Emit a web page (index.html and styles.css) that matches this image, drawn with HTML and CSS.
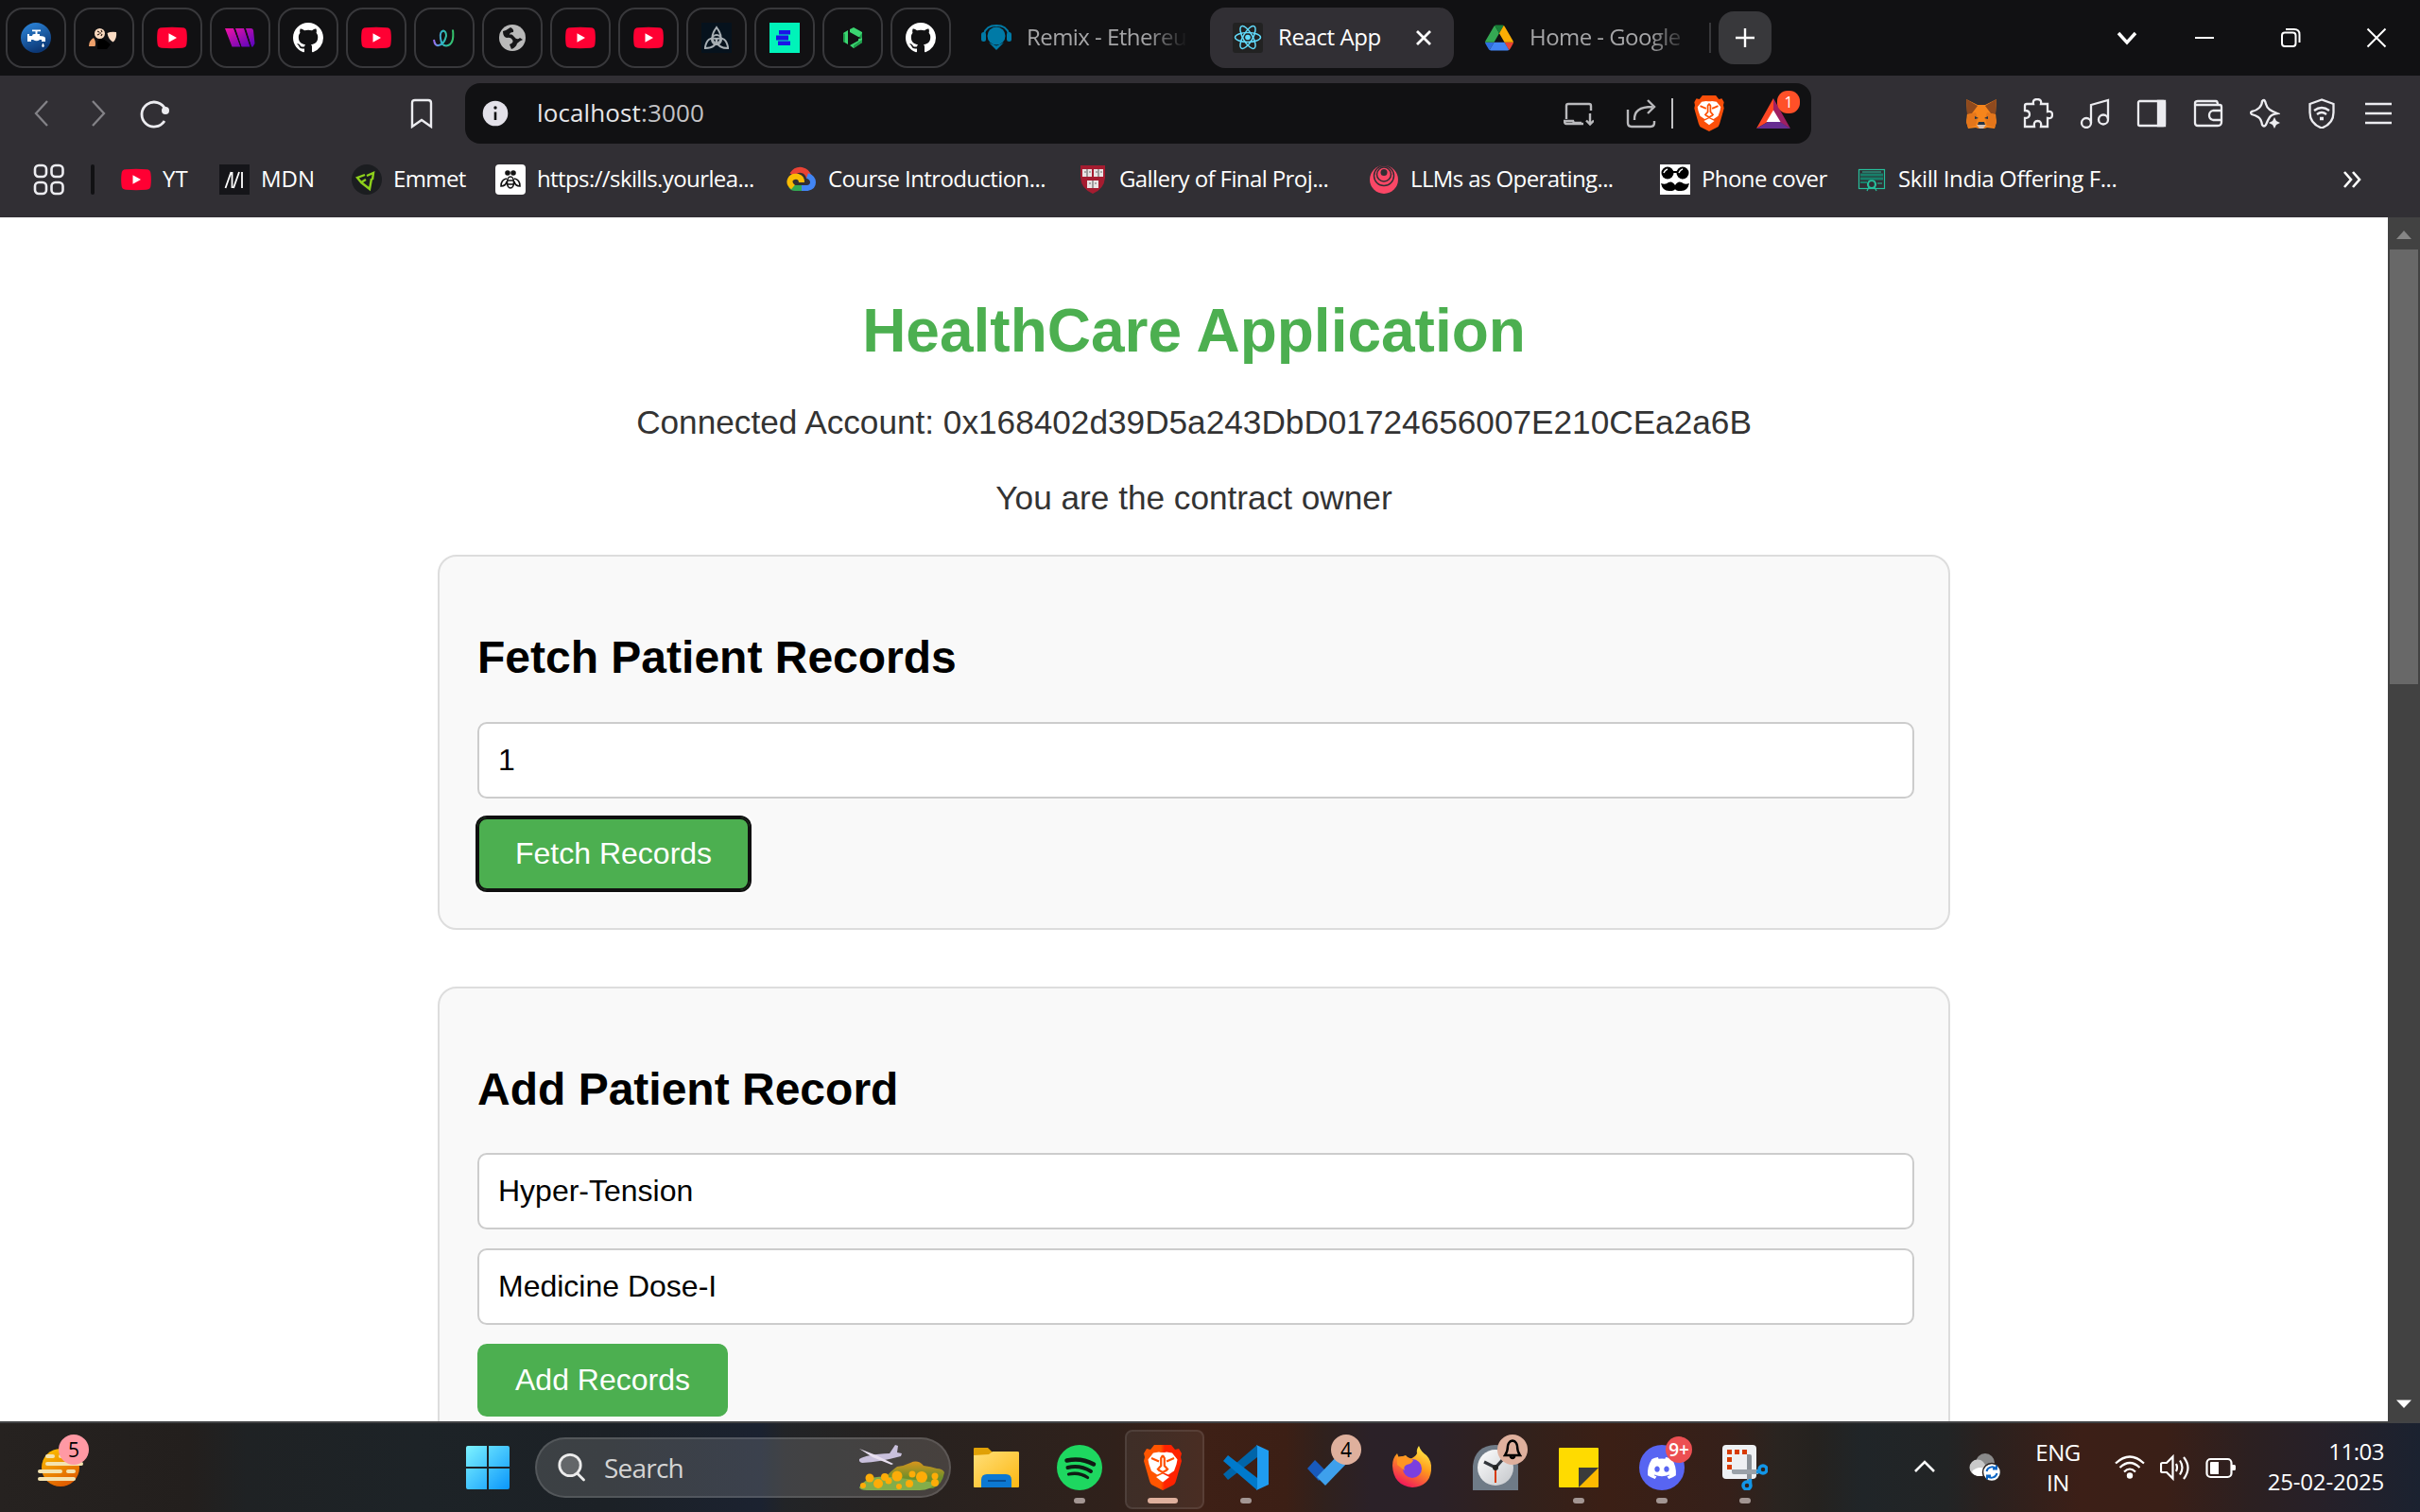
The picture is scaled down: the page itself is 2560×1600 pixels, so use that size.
FILE: index.html
```html
<!DOCTYPE html>
<html lang="en">
<head>
<meta charset="utf-8">
<title>React App</title>
<link rel="stylesheet" href="styles.css">
</head>
<body>
<svg class="sprite" aria-hidden="true">
  <defs>
    <linearGradient id="g-blue" x1="0" y1="0" x2="0.4" y2="1"><stop offset="0" stop-color="#2e8ae0"/><stop offset="1" stop-color="#0c3876"/></linearGradient>
    <linearGradient id="g-w" x1="0" y1="0" x2="1" y2="1"><stop offset="0" stop-color="#f213a4"/><stop offset="1" stop-color="#5204bf"/></linearGradient>
    <linearGradient id="g-swirl" x1="0" y1="0" x2="1" y2="0"><stop offset="0" stop-color="#9b6cf0"/><stop offset=".4" stop-color="#2fb6c9"/><stop offset="1" stop-color="#35c46a"/></linearGradient>
    <linearGradient id="g-win" x1="0" y1="0" x2="1" y2="1"><stop offset="0" stop-color="#7df3ff"/><stop offset="1" stop-color="#0a96fb"/></linearGradient>
    <linearGradient id="g-sun" x1="0" y1="0" x2=".5" y2="1"><stop offset="0" stop-color="#ffc800"/><stop offset="1" stop-color="#e05f00"/></linearGradient>
    <linearGradient id="g-folder" x1="0" y1="0" x2="1" y2="1"><stop offset="0" stop-color="#ffdf78"/><stop offset="1" stop-color="#fdb813"/></linearGradient>
    <linearGradient id="g-brave" x1="0" y1="0" x2="1" y2="0"><stop offset="0" stop-color="#ff5500"/><stop offset=".45" stop-color="#ff5500"/><stop offset=".55" stop-color="#ff2200"/><stop offset="1" stop-color="#ff2200"/></linearGradient>
    <linearGradient id="g-fire" x1=".8" y1="0" x2=".3" y2="1"><stop offset="0" stop-color="#fff14a"/><stop offset=".45" stop-color="#ff9a1c"/><stop offset="1" stop-color="#f0105e"/></linearGradient>
    <linearGradient id="g-hill" x1="0" y1="0" x2="0" y2="1"><stop offset="0" stop-color="#d9951c"/><stop offset=".6" stop-color="#6f8f2a"/></linearGradient>
    <linearGradient id="g-clock" x1="0" y1="0" x2="1" y2="1"><stop offset="0" stop-color="#fff"/><stop offset="1" stop-color="#c3c6ca"/></linearGradient>
    <symbol id="youtube" viewBox="0 0 32 32"><path fill="#ff0033" d="M5 5.3Q16 4.4 27 5.3 31.300 5.500 31.500 10 32.200 16 31.500 22 31.300 26.500 27 26.700 16 27.600 5 26.700.7 26.500.5 22-.2 16 .5 10 .7 5.500 5 5.300z"/><path fill="#fff" d="M12.500 11.300v9.400l8.500-4.700z"/></symbol>
    <symbol id="github" viewBox="0 0 16 16"><path fill="#fff" d="M8 0C3.580 0 0 3.580 0 8c0 3.540 2.290 6.530 5.470 7.590.4.070.55-.17.55-.38 0-.19-.01-.82-.01-1.490-2.010.37-2.530-.49-2.690-.94-.09-.23-.48-.94-.82-1.130-.28-.15-.68-.52-.01-.53.63-.01 1.080.58 1.230.82.72 1.210 1.870.87 2.330.66.07-.52.28-.87.51-1.070-1.780-.2-3.640-.89-3.640-3.950 0-.87.31-1.590.82-2.150-.08-.2-.36-1.020.08-2.120 0 0 .67-.21 2.200.82.64-.18 1.320-.27 2-.27s1.360.09 2 .27c1.530-1.040 2.200-.82 2.200-.82.44 1.100.16 1.920.08 2.120.51.56.82 1.270.82 2.150 0 3.070-1.870 3.750-3.650 3.950.29.25.54.73.54 1.480 0 1.070-.01 1.930-.01 2.200 0 .21.15.46.55.38A8.010 8.010 0 0 0 16 8c0-4.420-3.580-8-8-8z"/></symbol>
    <symbol id="lion" viewBox="0 0 40 48"><path d="M11 0H29L33 5l4-1 3 5-1 4 1 4-6 21q-1 4-4 5L20 48l-10-5q-3-1-4-5L0 17l1-4L0 9l3-5 4 1z"/><path fill="#fff" d="M10 8.500l6-1q4 1 8 0l6 1 5.500 7-1 5-2.500 7-6 4-6-2.500-6 2.500-6-4-2.500-7-1-5z"/><path fill="#fff" d="M20 30.500l7 3.500-7 5.500-7-5.500z"/><path fill="none" stroke="#ff5000" stroke-width="2.200" d="M8 14l8 3.500M32 14l-8 3.500M20 11l-1.800 3v8l-4 4.500M20 11l1.800 3v8l4 4.500M15.500 26.500l4.500 2.500 4.500-2.500"/></symbol>
  </defs>
</svg>

<header class="chrome">
  <div class="tabstrip">
    <div class="pin"><svg viewBox="0 0 32 32"><circle cx="16" cy="16" r="16" fill="url(#g-blue)"/><path fill="#fff" d="M12 7.500h9v1.800h-3.500V12H20v2q5 0 6 2v4h-4v-2h-2q-3 2.500-7 0h-2v2H7v-8h2v2h3q0-2 2-2h1.500V9.300H12zM23.500 21.500q2.500 4 0 4.500-2.500-.5 0-4.500z"/></svg></div>
    <div class="pin"><svg viewBox="0 0 32 32"><circle cx="11.500" cy="11.500" r="5.500" fill="#f9d9bf"/><path d="M9 9l2 1M13 8l1 2M9 13l2-1M13 14l1-2M11 11h2" stroke="#2a1a12" stroke-width="1.200"/><path fill="#eda06b" d="M0 25q0-6 5-9 3 4 1.500 9z"/><path fill="#fbdcc4" d="M19.500 11q4-2 9.500-1 1 7-3.500 10.500-5-3-6-9.500z"/><path fill="#000" d="M9 20q4-5 9-1l5 4-4 5H9z"/></svg></div>
    <div class="pin"><svg><use href="#youtube"/></svg></div>
    <div class="pin"><svg viewBox="0 0 32 32"><path fill="url(#g-w)" d="M0 6h9l7.500 19.500h-9zM11 6h9l6.500 19.500h-9zM22 6h5.500q2 0 2.500 2l1.500 14-2 3.500H28z"/><path fill="none" stroke="#111113" d="M10 6l7 20M21 6l6.500 20"/></svg></div>
    <div class="pin"><svg><use href="#github"/></svg></div>
    <div class="pin"><svg><use href="#youtube"/></svg></div>
    <div class="pin"><svg viewBox="0 0 32 32"><path fill="none" stroke="url(#g-swirl)" stroke-width="2" d="M5 18q1 7 5 6 6-1 8-10 0-5-3-5.500-4 1-3 8 1 8 6 8 9-1 7-17"/></svg></div>
    <div class="pin"><svg viewBox="0 0 32 32"><circle cx="16" cy="16" r="14" fill="#b9b9b9"/><path fill="#151517" d="M14 5q-4 3-8 4 0 6 4 7 4-1 6 2t-3 5l2 5q5-2 6-6 3-3 6-4l-3-2q-3 3-6-1t-5-2q0-3 4-3 1-3-3-5z"/></svg></div>
    <div class="pin"><svg><use href="#youtube"/></svg></div>
    <div class="pin"><svg><use href="#youtube"/></svg></div>
    <div class="pin"><svg viewBox="0 0 32 32"><rect width="32" height="32" fill="#06121d"/><g fill="none" stroke="#a9b0b5" stroke-width="2"><path d="M16 5q-9 12 0 18 9-6 0-18z"/><path d="M4 26q2-12 12-9 0 10-12 10z"/><path d="M28 26q-2-12-12-9 0 10 12 10z"/></g><circle cx="16" cy="18" r="5" fill="none" stroke="#a9b0b5" stroke-width="2"/></svg></div>
    <div class="pin"><svg viewBox="0 0 32 32"><rect width="32" height="32" fill="#00f3b9"/><path fill="#1a15e6" d="M10 8h12v4.500H10zM7 13.500h13v5H7zM9 19.500h13v4.500H9z"/></svg></div>
    <div class="pin"><svg viewBox="0 0 32 32"><path fill="#3bd671" d="M6 11l5-3v15l-5-3zM13 7l4-2 9 5v6l-4-1-9-5zM22 17l4-1v5l-9 6-4-3 9-5z"/><path fill="#1f9e4c" d="M6 11l2 1v9l-2-1zM25 12l1-1v5l-3-1zM17 27v-3l9-6v3z"/></svg></div>
    <div class="pin"><svg><use href="#github"/></svg></div>
    <div class="tab"><svg viewBox="0 0 32 32"><g fill="#007aa6"><circle cx="16" cy="14" r="9.500"/><rect x="0" y="10" width="5" height="10" rx="2.500"/><rect x="27" y="10" width="5" height="10" rx="2.500"/><path d="M8 21l8 3.500 8-3.500-8 8z"/></g><path fill="none" stroke="#007aa6" stroke-width="2" d="M3 12Q5 3 16 3t13 9"/></svg><span class="tab-title">Remix - Ethereu</span></div>
    <div class="tab active"><svg viewBox="0 0 32 32"><rect width="32" height="32" rx="3" fill="#222"/><circle cx="16" cy="15.500" r="2.800" fill="#61dafb"/><g fill="none" stroke="#61dafb" stroke-width="1.500"><ellipse cx="16" cy="15.500" rx="13.500" ry="5"/><ellipse cx="16" cy="15.500" rx="13.500" ry="5" transform="rotate(60 16 15.500)"/><ellipse cx="16" cy="15.500" rx="13.500" ry="5" transform="rotate(120 16 15.500)"/></g></svg><span class="tab-title">React App</span><svg class="tab-close" viewBox="0 0 16 16"><path d="M1 1l14 14M15 1L1 15"/></svg></div>
    <div class="tab drive"><svg viewBox="-3 -7 93.300 92"><path fill="#2f6fe0" d="m6.600 66.850 3.850 6.650c.8 1.400 1.950 2.500 3.300 3.300l13.750-23.800h-27.500c0 1.550.4 3.100 1.200 4.500z"/><path fill="#34a853" d="m43.650 25-13.750-23.800c-1.350.8-2.500 1.900-3.300 3.300l-25.400 44a9.060 9.060 0 0 0-1.200 4.500h27.500z"/><path fill="#ea4335" d="m73.550 76.800c1.350-.8 2.500-1.900 3.300-3.300l1.600-2.750 7.650-13.250c.8-1.400 1.200-2.950 1.200-4.500h-27.500l5.850 11.500z"/><path fill="#188038" d="m43.650 25 13.750-23.800c-1.350-.8-2.900-1.200-4.500-1.200h-18.500c-1.600 0-3.150.45-4.500 1.200z"/><path fill="#4285f4" d="m59.800 53h-32.300l-13.750 23.800c1.350.8 2.900 1.200 4.500 1.200h50.800c1.600 0 3.150-.45 4.500-1.200z"/><path fill="#fbad04" d="m73.400 26.500-12.700-22c-.8-1.400-1.950-2.500-3.300-3.300l-13.750 23.800 16.150 28h27.450c0-1.550-.4-3.100-1.200-4.500z"/></svg><span class="tab-title">Home - Google</span></div>
    <span class="tab-divider"></span>
    <div class="new-tab"><svg viewBox="0 0 22 22"><path d="M11 1v20M1 11h20"/></svg></div>
    <div class="window-controls">
      <svg class="wc-search" viewBox="0 0 64 80"><path stroke-width="3.400" d="M23 35l9 10 9-10"/></svg>
      <svg viewBox="0 0 92 80"><path stroke-width="2" d="M36 40h20"/></svg>
      <svg viewBox="0 0 92 80"><rect x="37" y="34.500" width="14.500" height="14.500" rx="3"/><path d="M41 31h9q5.500 0 5.500 5.500V45"/></svg>
      <svg viewBox="0 0 92 80"><path d="M36.500 30.500l19 19M55.500 30.500l-19 19"/></svg>
    </div>
  </div>

  <div class="toolbar">
    <div class="nav-btn dim"><svg viewBox="0 0 32 32"><path d="M22 3L10 16l12 13"/></svg></div>
    <div class="nav-btn dim"><svg viewBox="0 0 32 32"><path d="M10 3l12 13-12 13"/></svg></div>
    <div class="nav-btn"><svg viewBox="0 0 32 32"><path d="M27 12A13 13 0 1 0 26 24" stroke-width="2.800"/><circle cx="27" cy="13" r="4" fill="#ececf0" stroke="none"/></svg></div>
    <div class="nav-btn mark"><svg viewBox="0 0 32 32"><path stroke-width="2.400" d="M6 5q0-3 3-3h14q3 0 3 3v25l-10-7-10 7z"/></svg></div>
    <div class="urlbar">
      <svg viewBox="0 0 32 32"><circle cx="16" cy="16" r="13.300" fill="#e3e1e9"/><path stroke="#111113" stroke-width="2.600" d="M16 14.500V23"/><circle cx="16" cy="10" r="1.700" fill="#111113"/></svg>
      <span class="url">localhost<span class="port">:3000</span></span>
      <div class="url-actions">
        <svg viewBox="0 0 32 32"><path d="M21 27H3q-2 0-2-3h9l1 2h8M3 22V8q0-2 2-2h22q2 0 2 2v5M28 16v11M24 23.500l4 4 4-4"/></svg>
        <svg class="share" viewBox="0 0 32 32"><path d="M2 12v14q0 4 4 4h20q4 0 4-4v-2M9 23q-1-14 19-14M23 2l7 7-7 7"/></svg>
        <span class="url-divider"></span>
        <svg class="shield" viewBox="0 0 40 48"><use href="#lion"/></svg>
        <div class="bat"><svg viewBox="0 0 36 32"><path fill="#ff4724" d="M18 0L0 32l12-7 6-11z"/><path fill="#9e1f63" d="M18 0l18 32-12-7-6-11z"/><path fill="#662d91" d="M0 32h36l-11-7H12z"/><path fill="#fff" d="M18 12.500l7.500 12.500h-15z"/></svg><span class="bat-badge">1</span></div>
      </div>
    </div>
    <div class="extensions">
      <div class="nav-btn"><svg class="fox" viewBox="0 0 32 32"><path fill="#f6851b" d="M0 1l12 6h8l12-6-1 15 1 9-2 7-8-1-3 1h-6l-3-1-8 1-2-7 1-9z"/><path fill="#8f4a1e" d="M0 1l12 7-6 8-5 1zM32 1L20 8l6 8 5 1z"/><path fill="#e4761b" d="M2 17l8-2 2 6-2 8-8 2-2-6zM30 17l-8-2-2 6 2 8 8 2 2-6z"/><path fill="#233447" d="M9 19l4 2-4 1zM23 19l-4 2 4 1zM13 25h6l1 3h-8z"/><path fill="#d7c1b3" d="M11 28h10l-3 4h-4z"/></svg></div>
      <div class="nav-btn"><svg viewBox="0 0 32 32"><path d="M4 6h7q-1-5 4-5t4 5h7v8q5-1 5 3.500T26 21v9h-7q1-6-3.500-6T12 30H2v-9q5 0 5-4t-5-4V8q0-2 2-2z"/></svg></div>
      <div class="nav-btn"><svg viewBox="0 0 32 32"><path d="M12 26V7l18-5v20"/><circle cx="7" cy="26" r="5"/><circle cx="25" cy="22.500" r="5"/></svg></div>
      <div class="nav-btn"><svg viewBox="0 0 32 32"><rect x="2" y="3" width="28" height="26" rx="1.500"/><path fill="#ececf0" d="M23 3h7v26h-7z"/></svg></div>
      <div class="nav-btn"><svg viewBox="0 0 32 32"><path d="M2 5v21q0 3 3 3h21q4 0 4-4V9q0-2-2-2H4q-2 0-2-2 0-2 3-2h19q2 0 2 4M30 13H21q-4 1-4 5t4 5h9"/></svg></div>
      <div class="nav-btn"><svg viewBox="0 0 32 32"><path d="M15 2q1 0 2 4t4 6 8 4q-6 1-8 4t-4 8q-2 3-4 0-1-6-4-8t-7-3q-2-2 0-3 5-1 8-4t3-7q1-1 2-1z"/><path fill="#ececf0" stroke="none" d="M26 20l2 4 4 2-4 2-2 4-2-4-4-2 4-2z"/></svg></div>
      <div class="nav-btn"><svg viewBox="0 0 32 32"><path d="M16 1.500L3.500 6v9q0 12 12.500 16.500Q28.500 27 28.500 15V6zM8 13q8-6 16 0M11 17q5-4 10 0"/><path stroke-width="3.500" d="M14 21.500h4"/></svg></div>
      <div class="nav-btn"><svg viewBox="0 0 32 32"><path d="M2 6h28M2 16h28M2 26h28"/></svg></div>
    </div>
  </div>

  <div class="bookmarks">
    <svg class="apps" viewBox="0 0 34 34"><g fill="none" stroke="#ececf0" stroke-width="2.600"><rect x="2" y="2" width="12" height="12" rx="4"/><rect x="19.500" y="2" width="12" height="12" rx="4"/><rect x="2" y="20" width="12" height="12" rx="4"/><rect x="19.500" y="20" width="12" height="12" rx="4"/></g></svg>
    <span class="bm-divider"></span>
    <div class="bm wide w104"><svg><use href="#youtube"/></svg><span>YT</span></div>
    <div class="bm wide w140"><svg viewBox="0 0 32 32"><rect width="32" height="32" fill="#151519"/><path fill="none" stroke="#fff" stroke-width="1.800" d="M6.500 25L12.500 8M13.500 8v17M15 25l6-17M24 8v17"/></svg><span>MDN</span></div>
    <div class="bm w152"><svg viewBox="0 0 32 32"><circle cx="16" cy="16" r="16" fill="#1b1d20"/><path fill="none" stroke="#8ed11b" stroke-width="2.400" d="M14 11l-8 3 4 5 5-3M10 19l9 7 2-11M16 12l7-3-1 7"/></svg><span>Emmet</span></div>
    <div class="bm w308"><svg viewBox="0 0 32 32"><rect width="32" height="32" rx="4" fill="#fff"/><g fill="none" stroke="#111" stroke-width="1.600"><circle cx="13" cy="9" r="2" fill="#111"/><circle cx="19" cy="9" r="2" fill="#111"/><ellipse cx="16" cy="19" rx="3.500" ry="6"/><path d="M13 17h6M13 21h6M12 15q-6 1-6 8 5 0 6-5M20 15q6 1 6 8-5 0-6-5"/></g></svg><span>https://skills.yourlea...</span></div>
    <div class="bm w308"><svg viewBox="0 0 32 32"><g fill="none" stroke-width="6"><path stroke="#ea4335" d="M6 11Q10 5 16 6t8 8"/><path stroke="#4285f4" d="M22 12q6 2 6 7t-6 6h-6"/><path stroke="#34a853" d="M16 25H9q-3 0-4-2"/><path stroke="#fbbc04" d="M7 24q-5-4-3-8t8-3q4 1 4 6"/></g></svg><span>Course Introduction...</span></div>
    <div class="bm w308"><svg viewBox="0 0 32 32"><path fill="#a51c30" d="M3 1h26v13q-1 12-13 17Q4 26 3 14z"/><path fill="#e9e4e4" d="M5 5h10v8H5zM17 5h10v8H17zM10 17h12v8H10z"/><path stroke="#6b6b6b" stroke-width="1.200" d="M10 5v8M22 5v8M16 17v8M7 8h2M12 8h2M19 8h2M24 8h2M12 20h2M18 20h2"/></svg><span>Gallery of Final Proj...</span></div>
    <div class="bm w308"><svg viewBox="0 0 32 32"><circle cx="16" cy="16" r="15" fill="#fb4766"/><g fill="none" stroke="#312f34" stroke-width="1.500"><circle cx="16" cy="12" r="10.500"/><circle cx="16" cy="10.500" r="7.500"/></g><circle cx="16" cy="8.500" r="3.500" fill="#312f34"/></svg><span>LLMs as Operating...</span></div>
    <div class="bm w208"><svg viewBox="0 0 32 32"><rect width="32" height="32" fill="#fff"/><g fill="#000"><circle cx="8" cy="9" r="6.500"/><circle cx="24" cy="9" r="6.500"/><path d="M16 22q3-5 7-3 3 3 8 1-2 9-10 8-4 0-5-2-1 2-5 2-8 1-10-8 5 2 8-1 4-2 7 3z"/></g><path stroke="#000" stroke-width="2" d="M13 8h6"/><path fill="none" stroke="#fff" stroke-width="1.500" d="M4 9q1-3 4-4M20 9q1-3 4-4"/></svg><span>Phone cover</span></div>
    <div class="bm w300"><svg viewBox="0 0 32 32"><g fill="none" stroke="#26bf9c" stroke-width="1.200"><rect x="2.500" y="5.500" width="27" height="20"/><circle cx="16" cy="21" r="4" stroke-width="2.200"/><path d="M13 24l-2 4M19 24l2 4M22 20h5M6 8h20"/></g><path fill="#17806a" d="M4 9.500h24v3H4zM4 13.500h24v3H4zM4 18h7v2H4z"/></svg><span>Skill India Offering F...</span></div>
    <svg class="more" viewBox="0 0 20 20"><path d="M2 2l7 8-7 8M11 2l7 8-7 8"/></svg>
  </div>
</header>

<div class="viewport">
  <main class="app">
    <h1>HealthCare Application</h1>
    <p>Connected Account: 0x168402d39D5a243DbD01724656007E210CEa2a6B</p>
    <p>You are the contract owner</p>
    <section class="card">
      <h2>Fetch Patient Records</h2>
      <div class="field">1</div>
      <button class="btn focused">Fetch Records</button>
    </section>
    <section class="card">
      <h2>Add Patient Record</h2>
      <div class="field">Hyper-Tension</div>
      <div class="field">Medicine Dose-I</div>
      <button class="btn">Add Records</button>
    </section>
  </main>
  <div class="scrollbar">
    <svg viewBox="0 0 34 34"><path fill="#868686" d="M17 14l8 9H9z"/></svg>
    <div class="thumb"></div>
    <svg viewBox="0 0 34 34"><path fill="#fff" d="M17 20l8-8.500H9z"/></svg>
  </div>
</div>

<footer class="taskbar">
  <div class="weather">
    <svg viewBox="0 0 48 48"><circle cx="24" cy="24" r="20" fill="url(#g-sun)"/><g fill="#f4e3b0"><rect x="8" y="10" width="10" height="4" rx="2"/><rect x="22" y="10" width="10" height="4" rx="2"/><rect x="8" y="18" width="40" height="4" rx="2"/><rect x="0" y="26" width="26" height="4" rx="2"/><rect x="30" y="26" width="10" height="4" rx="2"/><rect x="0" y="34" width="40" height="4" rx="2"/></g></svg>
    <span class="badge pink">5</span>
  </div>
  <svg class="start" viewBox="0 0 46 46"><path fill="url(#g-win)" d="M2 0H22V22H0V2q0-2 2-2zM24 0H44q2 0 2 2V22H24zM0 24H22V46H2q-2 0-2-2zM24 24H46V44q0 2-2 2H24z"/></svg>
  <div class="search">
    <svg class="lens" viewBox="0 0 30 32"><circle cx="13" cy="13.500" r="11.200"/><path d="M20.500 22l7 7"/></svg>
    <span>Search</span>
    <svg class="promo" viewBox="0 0 92 48"><path fill="url(#g-hill)" d="M26 36q8-9 14-13 8-1 14-4 8-4 14 3 8 1 14 3 6 0 8 4-2 13-12 17H30z"/><path fill="#83ad4a" d="M0 45q8-14 34-11t46 6q-4 8-16 8H8q-7 0-8-3z"/><g fill="#fdac08"><circle cx="11" cy="35" r="4.500"/><circle cx="27" cy="34" r="4"/><circle cx="40" cy="33" r="5.500"/><circle cx="66" cy="34" r="6"/><circle cx="56" cy="31" r="3.500"/><circle cx="80" cy="33" r="3.500"/><circle cx="20" cy="41" r="5"/><circle cx="53" cy="41" r="4"/><circle cx="80" cy="40" r="4"/><circle cx="31" cy="38" r="3.500"/><circle cx="4" cy="43" r="3"/><circle cx="42" cy="44" r="3"/></g><path fill="#c9c0dc" d="M0 15q8-5 32-6l6-9 3 1-1 7 5 1-1 3Q22 18 3 19q-4-1-3-4z"/><path fill="#e8dff0" d="M0 4l18 7 18 9-2 1-20-8z"/></svg>
  </div>
  <div class="tasks">
    <div class="task"><svg viewBox="0 0 48 48"><path fill="#e0a106" d="M0 4q0-1 1-1h14l5 5v6H0z"/><path fill="url(#g-folder)" d="M0 11l16-1 4-3h26q2 0 2 1v36q0 1-1 1H1q-1 0-1-1z"/><path fill="#0c78d2" d="M8 45V37q0-6 6-6h20q6 0 6 6v8z"/><path stroke="#064e94" stroke-width="2" d="M15 38h19"/></svg></div>
    <div class="task run"><svg viewBox="0 0 48 48"><circle cx="24" cy="24" r="24" fill="#1ed760"/><path fill="none" stroke="#101b14" stroke-linecap="round" stroke-width="4.500" d="M10.500 16.500q15-3.500 28.500 4"/><path fill="none" stroke="#101b14" stroke-linecap="round" stroke-width="4" d="M11.500 24q13-3 24.500 4"/><path fill="none" stroke="#101b14" stroke-linecap="round" stroke-width="3.300" d="M12.500 31q11-2.500 20 3.500"/></svg></div>
    <div class="task run current"><svg viewBox="0 0 40 48" fill="url(#g-brave)"><use href="#lion"/></svg></div>
    <div class="task run"><svg viewBox="0 0 48 48"><path fill="#0065a9" d="M0 31l5 6 31-24V0L0 31z"/><path fill="#007acc" d="M0 17l5-6 31 24v13L0 17z"/><path fill="#1f9cf0" d="M35 0l13 6v36l-13 6q1-1 1-3V3q0-2-1-3z"/></svg></div>
    <div class="task"><svg viewBox="0 0 48 48"><path fill="#185abd" d="M1 25l8-9 12 12-8 10z"/><path fill="#3ea0ec" d="M37 7l9 9-26 27-9-9z"/></svg><span class="badge">4</span></div>
    <div class="task"><svg viewBox="0 0 48 48"><path fill="url(#g-fire)" d="M3 22q0-8 5-13l2 5 4-2 3-1 4 4q6-2 8-6-1-4 2-8 2 6 8 10 6 6 5 16-2 17-20 18Q4 43 3 22z"/><circle cx="24" cy="25" r="10" fill="#7a3fe0"/><path fill="#ff9522" d="M8 13q8-3 17 3-1 4-7 5-4 2-2 6l-8-6z"/></svg></div>
    <div class="task"><svg viewBox="0 0 48 48"><path fill="#6f7b87" d="M0 48V22Q2 1 24 0q22 1 24 22v26z"/><circle cx="24" cy="24" r="19" fill="url(#g-clock)"/><g fill="none" stroke-width="3.200"><path stroke="#33373c" d="M12 18l12 6 8-9"/><path stroke="#d83b01" stroke-width="2" d="M24 24v16"/></g><circle cx="24" cy="24" r="3" fill="#222"/></svg><span class="badge"><svg viewBox="0 0 20 22"><path d="M2 17q3-4 3-10 1-5 5-5.500Q14 2 15 7q0 6 3 10zM7.500 18q2.500 4 5 0"/></svg></span></div>
    <div class="task run"><svg viewBox="0 0 48 48"><path fill="#ffdb00" d="M4 3h40q1 0 1 1v20L25 45H4q-1 0-1-1V4q0-1 1-1z"/><path fill="#fdb900" d="M45 24v20q0 1-1 1H24z"/><path fill="#3b3b3b" d="M24 24h21L24 45z"/></svg></div>
    <div class="task run"><svg viewBox="0 0 48 48"><circle cx="24" cy="24" r="24" fill="#5865f2"/><path fill="#fff" transform="translate(9 9.500) scale(1.250)" d="M20.317 4.370a19.790 19.790 0 0 0-4.885-1.515.074.074 0 0 0-.079.037c-.21.375-.444.864-.608 1.250a18.270 18.270 0 0 0-5.487 0 12.640 12.640 0 0 0-.617-1.250.077.077 0 0 0-.079-.037A19.736 19.736 0 0 0 3.677 4.370a.07.07 0 0 0-.032.027C.533 9.046-.32 13.580.099 18.057a.082.082 0 0 0 .031.057 19.900 19.900 0 0 0 5.993 3.030.078.078 0 0 0 .084-.028 14.090 14.090 0 0 0 1.226-1.994.076.076 0 0 0-.041-.106 13.100 13.100 0 0 1-1.872-.892.077.077 0 0 1-.008-.128c.12-.09.25-.19.372-.292a.074.074 0 0 1 .077-.01c3.928 1.793 8.180 1.793 12.062 0a.074.074 0 0 1 .078.01c.12.098.246.198.373.292a.077.077 0 0 1-.006.127 12.300 12.300 0 0 1-1.873.892.077.077 0 0 0-.041.107c.36.698.772 1.362 1.225 1.993a.076.076 0 0 0 .084.028 19.840 19.840 0 0 0 6.002-3.030.077.077 0 0 0 .032-.054c.5-5.177-.838-9.674-3.549-13.660a.061.061 0 0 0-.031-.03zM8.020 15.330c-1.183 0-2.157-1.085-2.157-2.419 0-1.333.956-2.419 2.157-2.419 1.210 0 2.176 1.096 2.157 2.420 0 1.333-.956 2.418-2.157 2.418zm7.975 0c-1.183 0-2.157-1.085-2.157-2.419 0-1.333.955-2.419 2.157-2.419 1.210 0 2.176 1.096 2.157 2.420 0 1.333-.946 2.418-2.157 2.418z"/></svg><span class="badge red">9+</span></div>
    <div class="task run"><svg viewBox="0 0 48 48"><rect x="0" y="0" width="36" height="36" rx="4" fill="#eef0f3"/><path fill="#d83b01" d="M5 5h5v5H5zM13 5h5v5h-5zM21 5h5v5h-5zM5 13h5v5H5zM5 21h5v5H5z"/><path fill="#8b9299" d="M26 10h3q2 0 2 2v26h-5z"/><path fill="#9aa1a8" d="M10 26h28v5H12q-2 0-2-2z"/><g fill="none" stroke="#1296e8" stroke-width="3.500"><circle cx="43" cy="26" r="4"/><circle cx="26" cy="43" r="4"/><path d="M36 28.500h4M29.500 36v5"/></g></svg></div>
  </div>
  <div class="tray">
    <svg class="ic32" viewBox="0 0 32 32"><path stroke-width="2.600" d="M6 20l10-10 10 10"/></svg>
    <svg class="cloud" viewBox="0 0 36 32"><circle cx="17" cy="11" r="10" fill="#8a8a8a" stroke="none"/><circle cx="9" cy="16" r="8.500" fill="#c9c9c9" stroke="none"/><path fill="#fff" stroke="none" d="M3 20q6-6 14-3v8H9q-5-1-6-5z"/><circle cx="24" cy="21" r="9.500" fill="#fff" stroke="#2c2422" stroke-width="1.500"/><path stroke="#0b65c4" stroke-width="2" d="M18.500 20a6 6 0 0 1 10-3M29.500 22a6 6 0 0 1-10 3M29 13.500v4h-4M19 28.500v-4h4"/></svg>
    <div class="lang"><span>ENG</span><span>IN</span></div>
    <svg class="ic32 wifi" viewBox="0 0 32 32"><path d="M1 11.500q15-14 30 0M5.500 16q10.500-10 21 0M10 20.500q6-6 12 0"/><circle cx="16" cy="24.500" r="3.200" fill="#fff" stroke="none"/></svg>
    <svg class="ic32 gap" viewBox="0 0 32 32"><path d="M1 12.500q0-1.500 1.500-1.500H7l6.500-6.500v23L7 21H2.500Q1 21 1 19.500zM17 12q2 4 0 8M21 8.500q5 7.500 0 15M25 5q9 11 0 23"/></svg>
    <svg class="ic32 gap" viewBox="0 0 32 32"><rect x="1.500" y="7" width="26" height="19" rx="4"/><path fill="#fff" stroke="none" d="M5 11q0-1 1-1h8v13H6q-1 0-1-1zM28 13h2.500q1.500 0 1.500 1.500v3q0 1.500-1.500 1.500H28z"/></svg>
    <div class="clock"><span class="time">11:03</span><span class="date">25-02-2025</span></div>
  </div>
</footer>
</body>
</html>
```
FILE: styles.css
```css
* { box-sizing: border-box; }
html, body { margin: 0; width: 2560px; height: 1600px; overflow: hidden; }
body {
  display: grid;
  grid-template-rows: 230px 1274px 96px;
  background: #fff;
  font-family: "Open Sans", "Noto Sans", sans-serif;
}
svg { display: block; flex: none; }
.sprite { position: absolute; width: 0; height: 0; }

/* browser chrome */
.chrome { background: #312f34; color: #fff; font-size: 24px; }
.tabstrip { display: flex; align-items: center; gap: 8px; height: 80px; padding-left: 6px; background: #111113; }
.pin {
  display: flex; align-items: center; justify-content: center; flex: none;
  width: 64px; height: 64px; border: 2px solid #38383b; border-radius: 18px;
}
.pin svg, .tab > svg:first-child, .bm svg { width: 32px; height: 32px; }
.tab {
  display: flex; align-items: center; flex: none; gap: 16px;
  width: 258px; height: 64px; padding: 0 16px 0 24px; border-radius: 16px; color: #a5a5a7;
}
.tab-title {
  flex: 1; padding-bottom: 3px; letter-spacing: -.55px; white-space: nowrap;
  -webkit-mask-image: linear-gradient(90deg, #000 75%, transparent);
  mask-image: linear-gradient(90deg, #000 75%, transparent);
}
.tab.active { background: #312f34; color: #fff; padding-right: 24px; }
.tab.active .tab-title { letter-spacing: -.4px; -webkit-mask-image: none; mask-image: none; }
.tab .tab-close { width: 16px; height: 16px; fill: none; stroke: #fff; stroke-width: 2.800; }
.tab-divider { width: 2px; height: 32px; margin-left: -4px; background: #38383b; }
.new-tab {
  display: flex; align-items: center; justify-content: center;
  width: 56px; height: 56px; border-radius: 16px; background: #38383b;
}
.new-tab svg { width: 22px; fill: none; stroke: #fff; stroke-width: 2.400; }
.window-controls { display: flex; margin-left: auto; fill: none; stroke: #fff; stroke-width: 2; }
.window-controls svg { width: 92px; height: 80px; margin-right: -1px; }
.window-controls svg:last-child { margin-right: 0; }
.window-controls .wc-search { width: 64px; margin-right: 4px; }

.toolbar { display: flex; align-items: center; height: 80px; padding: 0 14px; }
.nav-btn { display: flex; justify-content: center; flex: none; width: 60px; fill: none; stroke: #ececf0; stroke-width: 2.300; }
.nav-btn svg { width: 32px; height: 32px; }
.nav-btn .fox { stroke: none; }
.dim { stroke: #838287; }
.mark { margin-left: 222px; }
.urlbar {
  display: flex; align-items: center; width: 1424px; height: 64px; margin-left: 16px;
  padding: 0 22px 0 16px; border-radius: 16px; background: #111113;
}
.urlbar svg { width: 32px; height: 32px; }
.url { margin-left: 28px; padding-bottom: 2px; font-size: 26px; letter-spacing: .12px; color: #e6e6e8; }
.port { color: #c3c3c6; }
.url-actions { display: flex; align-items: center; margin-left: auto; fill: none; stroke: #b9b9bc; stroke-width: 2.400; }
.urlbar .share { margin-left: 34px; }
.url-divider { width: 2px; height: 32px; margin: 0 22px 0 16px; background: #c0c0c2; }
.urlbar .shield { width: 32px; height: 38px; stroke: none; fill: #fb4f0a; }
.bat { position: relative; width: 36px; margin-left: 34px; stroke: none; }
.bat svg { width: 36px; }
.bat-badge {
  position: absolute; left: 22px; top: -8px; width: 24px; height: 24px; border-radius: 11px;
  background: #ff5028; font-size: 16px; line-height: 25px; text-align: center;
}
.extensions { display: flex; margin-left: auto; }

.bookmarks { display: flex; align-items: center; height: 60px; padding-left: 35px; }
.apps { width: 34px; height: 34px; }
.bm-divider { width: 4px; height: 32px; margin: 0 28px 0 27px; border-radius: 2px; background: #111113; }
.bm { display: flex; align-items: center; gap: 12px; flex: none; letter-spacing: -.6px; white-space: nowrap; }
.bm span { padding-bottom: 3px; }
.wide { letter-spacing: 0; }
.w104 { width: 104px; }
.w140 { width: 140px; }
.w152 { width: 152px; }
.w308 { width: 308px; }
.w208 { width: 208px; }
.w300 { width: 300px; letter-spacing: -.4px; }
.more { width: 20px; height: 20px; margin: 0 62px 0 auto; fill: none; stroke: #fff; stroke-width: 2.600; }

/* page */
.viewport { display: flex; overflow: hidden; background: #fff; }
.app { width: 1600px; margin: 0 463px; padding-top: 40px; font-family: "Liberation Sans", Arial, sans-serif; }
.app h1 { margin: 43px 0 40px; font-size: 64px; line-height: 74px; text-align: center; color: #4caf50; }
.app p { margin: 0 0 40px; font-size: 35.200px; line-height: 40px; text-align: center; color: #333; }
.card { height: 396.700px; margin-bottom: 60px; padding: 40px; border: 2px solid #ddd; border-radius: 20px; background: #f9f9f9; }
.card:last-child { height: 520px; }
.card h2 { margin: 39.840px 0; padding-bottom: 2px; font-size: 48px; line-height: 53px; color: #000; }
.field {
  width: 1520px; height: 81px; margin-bottom: 20px; padding: 20px; border: 2px solid #ccc; border-radius: 10px;
  background: #fff; font-size: 32px; line-height: 37px; color: #000;
}
.btn {
  display: block; height: 77px; padding: 20px 40px; border: 0; border-radius: 10px;
  background: #4caf50; color: #fff; font: 32px/37px "Liberation Sans", Arial, sans-serif;
}
.focused { box-shadow: 0 0 0 2px #101010, inset 0 0 0 2px #101010, 0 0 0 4px #fff; }

.scrollbar { display: flex; flex-direction: column; align-items: center; width: 34px; background: #424242; }
.scrollbar svg { width: 34px; height: 34px; }
.thumb { width: 30px; height: 460px; margin-bottom: auto; background: #686868; }

/* taskbar */
.taskbar {
  display: flex; align-items: center; padding: 0 38px 0 40px; border-top: 2px solid #424345; color: #fff;
  background: linear-gradient(90deg, #262220 0, #231f1d 200px, #1f2224 260px, #1d2327 440px, #1c2126 640px, #1b2230 805px, #222427 830px, #272220 950px, #30211b 1180px, #3e2016 1270px, #3c1f15 1360px, #30211d 1400px, #2b2128 1450px, #2b2127 1520px, #33211b 1620px, #3b1f15 1700px, #35201a 1830px, #2a2420 1880px, #25221f 1920px, #202528 1970px, #222425 2060px, #2a211f 2100px, #3c1f17 2200px, #3a1f17 2290px, #2c2021 2380px, #272028 2450px, #1b2230 2560px);
}
.weather { position: relative; width: 48px; height: 48px; }
.weather svg { width: 48px; height: 48px; }
.badge {
  position: absolute; left: 22px; top: -11px; display: flex; align-items: center; justify-content: center;
  width: 32px; height: 32px; border-radius: 50%; background: #dfb09d; color: #000; font-size: 21px; line-height: 32px;
}
.pink { background: #ff99a4; }
.start { width: 46px; height: 46px; margin-left: 405px; }
.search {
  display: flex; align-items: center; width: 440px; height: 64px; margin: 0 4px 0 27px; padding: 0 3px 0 22px;
  border: 2px solid rgba(255, 255, 255, .12); border-radius: 32px; background: rgba(255, 255, 255, .14);
  color: #d4d4d4; font-size: 28px; letter-spacing: -.8px;
}
.lens { width: 30px; height: 32px; margin-right: 19px; fill: rgba(255, 255, 255, .2); stroke: #ececec; stroke-width: 2.800; stroke-linecap: round; }
.promo { width: 92px; height: 48px; margin-left: auto; }
.tasks { display: flex; }
.task { position: relative; display: flex; align-items: center; justify-content: center; width: 88px; height: 80px; }
.task > svg { width: 48px; height: 48px; }
.task .badge { left: 46px; top: 5px; }
.task .badge svg { width: 20px; height: 22px; fill: none; stroke: #000; stroke-width: 2.400; }
.task .red { left: 48px; top: 7px; width: 28px; height: 28px; background: #ec4f52; color: #fff; font-size: 19px; font-weight: 600; line-height: 28px; }
.run::after {
  content: ""; position: absolute; left: 38px; bottom: 2px; width: 12px; height: 6px; border-radius: 3px; background: #a39693;
}
.current::before {
  content: ""; position: absolute; left: 4px; top: 0; width: 80px; height: 80px; border: 2px solid rgba(255, 255, 255, .09);
  border-radius: 8px; background: rgba(255, 255, 255, .06);
}
.current::after { left: 28px; width: 32px; background: #dfb09d; }
.current > svg { position: relative; width: 40px; }
.tray { display: flex; align-items: center; margin-left: auto; fill: none; stroke: #fff; stroke-width: 2.200; font-size: 24px; line-height: 32px; }
.ic32 { width: 32px; height: 32px; }
.cloud { width: 36px; height: 32px; margin-left: 31px; }
.lang { display: flex; flex-direction: column; align-items: center; width: 60px; margin-left: 28px; letter-spacing: -.5px; }
.wifi { margin-left: 30px; }
.gap { margin-left: 16px; }
.clock { display: flex; flex-direction: column; align-items: flex-end; width: 157px; padding-bottom: 3px; }
.time { letter-spacing: -.5px; }
.date { letter-spacing: -.2px; }
```
